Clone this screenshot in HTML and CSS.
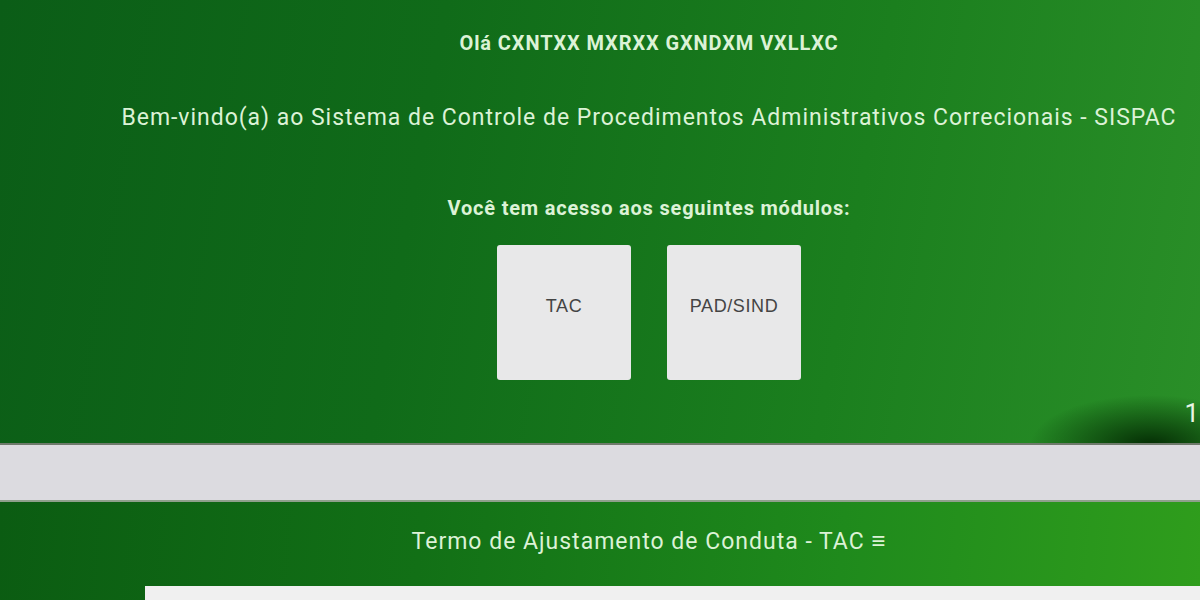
FILE: index.html
```html
<!DOCTYPE html>
<html lang="pt-BR">
<head>
<meta charset="utf-8">
<title>SISPAC</title>
<link rel="stylesheet" href="styles.css">
</head>
<body>
<section class="hero">
  <div class="hero-inner">
    <p class="hello">Olá CXNTXX MXRXX GXNDXM VXLLXC</p>
    <h1 class="welcome">Bem-vindo(a) ao Sistema de Controle de Procedimentos Administrativos Correcionais - SISPAC</h1>
    <p class="access">Você tem acesso aos seguintes módulos:</p>
    <div class="modules">
      <a class="module">TAC</a>
      <a class="module">PAD/SIND</a>
    </div>
  </div>
  <span class="edge-num">1</span>
</section>
<div class="band"></div>
<section class="tac">
  <h2 class="tac-title">Termo de Ajustamento de Conduta - TAC <span class="menu">&#8801;</span></h2>
  <div class="panel"></div>
</section>
</body>
</html>
```
FILE: styles.css
```css
html, body {
  margin: 0;
  padding: 0;
  background: #dcdbe0;
  overflow: hidden;
}
body {
  width: 1200px;
  height: 600px;
  font-family: Roboto, "Liberation Sans", Arial, sans-serif;
}
.hero {
  position: relative;
  height: 443px;
  border-bottom: 2px solid #6f7a6c;
  background:
    radial-gradient(ellipse 120px 50px at 1150px 445px, rgba(0,35,0,0.9), rgba(0,35,0,0) 100%),
    linear-gradient(100deg, #0b5d17 0%, #106b19 35%, #1b7f1e 70%, #2a8f28 100%);
  overflow: hidden;
}
.hero-inner {
  display: flex;
  flex-direction: column;
  align-items: center;
  padding-left: 98px;
  padding-top: 31px;
  color: #dcf2d6;
}
.hello {
  margin: 0;
  font-size: 20px;
  font-weight: bold;
  letter-spacing: 0.9px;
  line-height: 24px;
}
.welcome {
  margin: 49px 0 0;
  font-size: 23px;
  font-weight: normal;
  letter-spacing: 0.97px;
  line-height: 28px;
  white-space: nowrap;
}
.access {
  margin: 64px 0 0;
  font-size: 20px;
  font-weight: bold;
  letter-spacing: 0.8px;
  line-height: 24px;
}
.modules {
  display: flex;
  gap: 36px;
  margin-top: 25px;
}
.module {
  width: 134px;
  height: 135px;
  box-sizing: border-box;
  padding-bottom: 12px;
  display: flex;
  align-items: center;
  justify-content: center;
  background: #e8e8e9;
  border-radius: 3px;
  color: #444;
  font-family: "Liberation Sans", Arial, sans-serif;
  font-size: 18px;
  letter-spacing: 0.6px;
}
.edge-num {
  position: absolute;
  right: 1px;
  top: 398px;
  color: #e8f5e4;
  font-size: 26px;
  line-height: 30px;
}
.band {
  height: 55px;
  background: #dcdbe0;
  border-bottom: 2px solid #8fa08c;
}
.tac {
  height: 98px;
  background: linear-gradient(95deg, #0b5c12 0%, #127016 35%, #1f8a1c 70%, #2f9d1c 100%);
  padding-top: 24px;
  box-sizing: border-box;
  overflow: hidden;
}
.tac-title {
  margin: 0;
  text-align: center;
  padding-left: 98px;
  font-size: 23px;
  font-weight: normal;
  letter-spacing: 1px;
  line-height: 30px;
  color: #dcf2d6;
}
.menu {
  font-size: 24px;
}
.panel {
  margin: 29px 0 0 145px;
  height: 20px;
  background: #f0f0f0;
}
```
